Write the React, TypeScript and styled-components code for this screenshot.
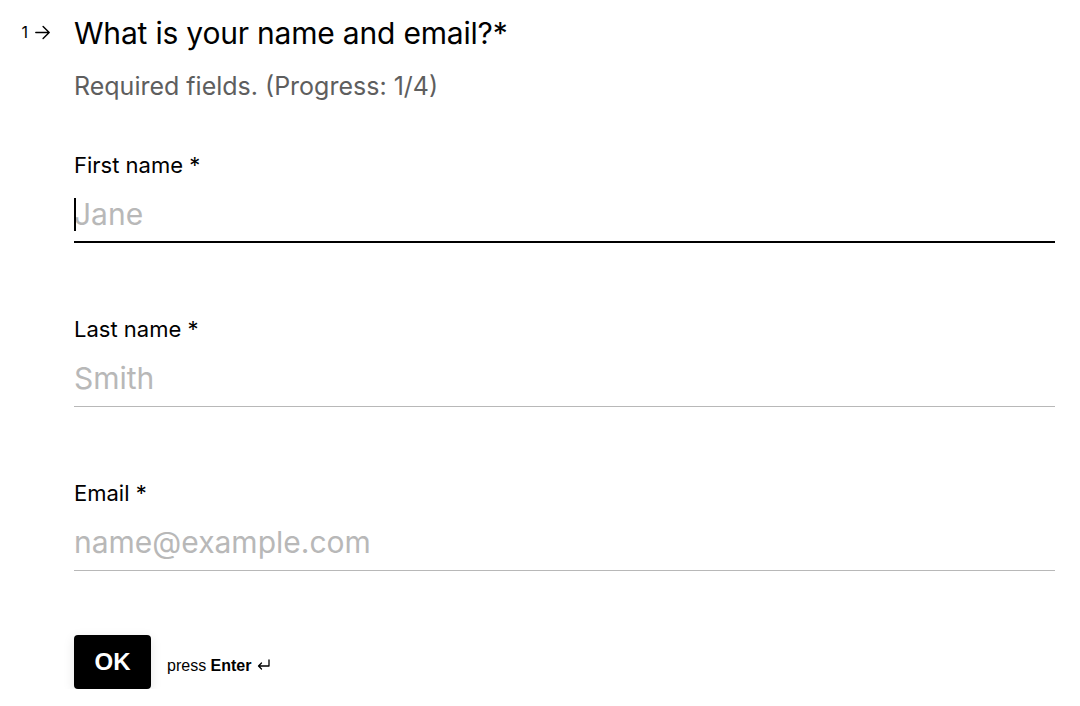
import React from "react";
import styled, { createGlobalStyle } from "styled-components";

const GlobalStyle = createGlobalStyle`
  html, body { margin: 0; padding: 0; background: #ffffff; }
  body { font-family: Inter, "Noto Sans", sans-serif; color: #000; }
  * { box-sizing: border-box; }
`;

const Page = styled.main`
  display: flex;
  padding: 15px 25px 0 0;
`;

const Gutter = styled.div`
  width: 74px;
  flex: none;
  height: 34px;
  display: flex;
  align-items: center;
  justify-content: flex-end;
  padding-right: 23px;
  gap: 6px;
  font-size: 16px;
  color: #000;
`;

const Arrow = styled.svg`
  width: 17px;
  height: 17px;
  display: block;
`;

const Content = styled.div`
  flex: 1;
  display: flex;
  flex-direction: column;
`;

const Title = styled.h1`
  margin: 0;
  font-size: 30px;
  font-weight: 400;
  line-height: 36px;
  letter-spacing: -0.2px;
`;

const Subtitle = styled.p`
  margin: 20px 0 0;
  font-size: 25px;
  line-height: 30px;
  color: #5e5e5e;
`;

const Fields = styled.div`
  margin-top: 50px;
  display: flex;
  flex-direction: column;
  gap: 72px;
`;

const Field = styled.label`
  display: flex;
  flex-direction: column;
  gap: 18px;
`;

const LabelText = styled.span`
  font-size: 22px;
  line-height: 28px;
  color: #000;
`;

const InputWrap = styled.div`
  position: relative;
`;

const Caret = styled.span`
  position: absolute;
  left: 0;
  top: 1px;
  width: 1.5px;
  height: 33px;
  background: #000;
  pointer-events: none;
`;

const Input = styled.input<{ $active?: boolean }>`
  display: block;
  font-family: Inter, "Noto Sans", sans-serif;
  font-size: 30px;
  line-height: 34px;
  height: 46px;
  padding: 0 0 ${(p) => (p.$active ? 10 : 11)}px;
  border: none;
  border-bottom: ${(p) => (p.$active ? "2px solid #000" : "1px solid #b8b8b8")};
  outline: none;
  background: transparent;
  color: #000;
  caret-color: transparent;
  width: 100%;
  &::placeholder { color: #b8b8b8; opacity: 1; }
`;

const Actions = styled.div`
  margin-top: 64px;
  display: flex;
  align-items: center;
  gap: 16px;
`;

const OkButton = styled.button`
  width: 77px;
  height: 54px;
  border: none;
  border-radius: 4px;
  background: #000;
  color: #fff;
  font-family: "Liberation Sans", Arial, sans-serif;
  font-weight: 700;
  font-size: 24px;
  box-shadow: 0 3px 12px rgba(0, 0, 0, 0.1);
  cursor: pointer;
`;

const Hint = styled.span`
  display: flex;
  align-items: center;
  gap: 6px;
  font-family: "Liberation Sans", Arial, sans-serif;
  font-size: 16px;
  color: #000;
  margin-top: 8px;
  b { font-weight: 700; }
`;

const EnterIcon = styled.svg`
  width: 13px;
  height: 11px;
  display: block;
  margin-top: -3px;
`;

export default function App() {
  return (
    <>
      <GlobalStyle />
      <Page>
        <Gutter>
          <span>1</span>
          <Arrow viewBox="0 0 14 14" fill="none" stroke="#000" strokeWidth="1.2" strokeLinecap="round" strokeLinejoin="round">
            <path d="M1.5 7h11M7.5 2L12.5 7 7.5 12" />
          </Arrow>
        </Gutter>
        <Content>
          <Title>What is your name and email?*</Title>
          <Subtitle>Required fields. (Progress: 1/4)</Subtitle>
          <Fields>
            <Field>
              <LabelText>First name *</LabelText>
              <InputWrap>
                <Input $active placeholder="Jane" />
                <Caret />
              </InputWrap>
            </Field>
            <Field>
              <LabelText>Last name *</LabelText>
              <Input placeholder="Smith" />
            </Field>
            <Field>
              <LabelText>Email *</LabelText>
              <Input placeholder="name@example.com" />
            </Field>
          </Fields>
          <Actions>
            <OkButton>OK</OkButton>
            <Hint>
              <span>
                press <b>Enter</b>
              </span>
              <EnterIcon viewBox="0 0 13 11" fill="none" stroke="#000" strokeWidth="1.3" strokeLinecap="round" strokeLinejoin="round">
                <path d="M12 1v6H1.5M4.5 4L1.5 7l3 3" />
              </EnterIcon>
            </Hint>
          </Actions>
        </Content>
      </Page>
    </>
  );
}
